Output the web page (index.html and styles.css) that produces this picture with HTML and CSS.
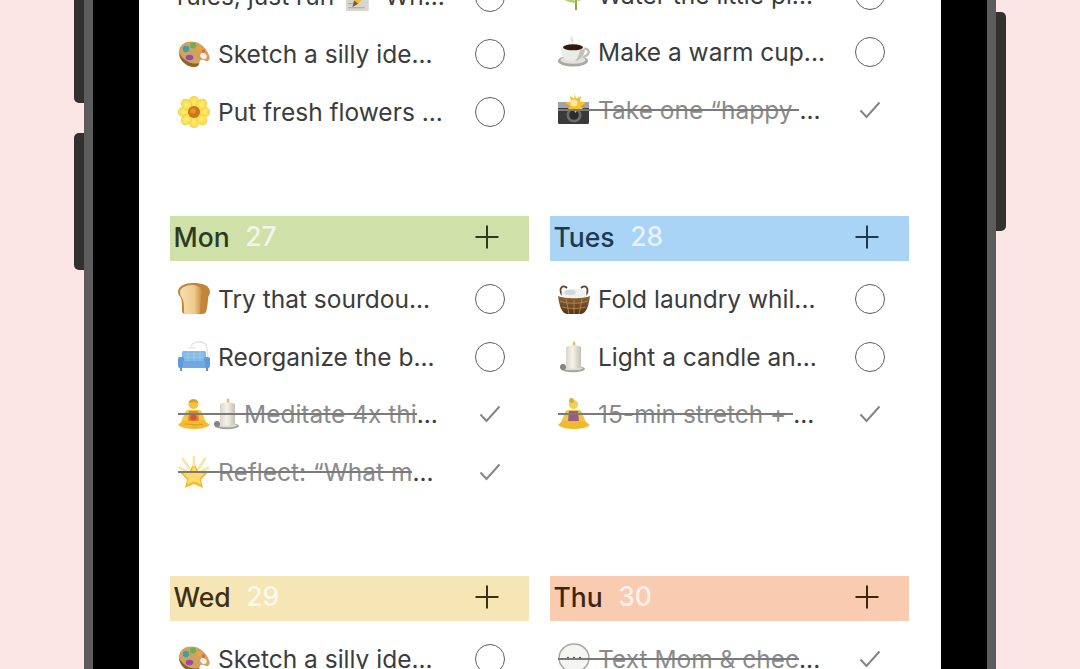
FILE: index.html
```html
<!DOCTYPE html>
<html lang="en">
<head>
<meta charset="utf-8">
<title>Weekly planner</title>
<link rel="stylesheet" href="styles.css">
</head>
<body>
<svg class="sprites" aria-hidden="true">
  <defs>
    <radialGradient id="g-petal"><stop offset="0" stop-color="#fff07a"/><stop offset="1" stop-color="#fad743"/></radialGradient>
    <linearGradient id="g-bread" x1="0" x2="1"><stop offset="0" stop-color="#f6dfae"/><stop offset=".65" stop-color="#eecb8c"/><stop offset="1" stop-color="#c98a3e"/></linearGradient>
    <linearGradient id="g-candle" x1="0" x2="1"><stop offset="0" stop-color="#d9d6cf"/><stop offset=".45" stop-color="#f6f2e8"/><stop offset="1" stop-color="#c4c0b6"/></linearGradient>
    <linearGradient id="g-basket" x1="0" y1="0" x2="0" y2="1"><stop offset="0" stop-color="#8f6435"/><stop offset="1" stop-color="#553417"/></linearGradient>

    <symbol id="e-palette" viewBox="0 0 32 32">
      <path d="M1 13C2 5 10 2 18 4c6 2 12 8 13.500 15 1 4-3 5-6 3-2-1-4 0-4 3 0 4-5 5-10 3C5 25 0 20 1 13z" fill="#cfa264"/>
      <path d="M1 15c1 7 5 11 10 13 5 2 10 1 10-3-5 2-15-1-20-10z" fill="#8f6330"/>
      <ellipse cx="25.500" cy="18" rx="3.400" ry="2.800" fill="#f6efe2" transform="rotate(35 25.500 18)"/>
      <circle cx="8" cy="11" r="3.200" fill="#3f9fa6"/>
      <circle cx="15" cy="7.500" r="3" fill="#6cb04a"/>
      <circle cx="21" cy="10.500" r="2.600" fill="#e8a33a"/>
      <ellipse cx="11.500" cy="19.500" rx="3.800" ry="2.800" fill="#9a4aa0"/>
      <circle cx="25.500" cy="13" r="1.700" fill="#e06a3a"/>
    </symbol>

    <symbol id="e-flower" viewBox="0 0 32 32">
      <circle cx="16" cy="16" r="11" fill="#fad743"/>
      <g fill="url(#g-petal)" stroke="#eec63f" stroke-width=".4">
        <ellipse cx="16" cy="6" rx="5" ry="6"/>
        <ellipse cx="16" cy="26" rx="5" ry="6"/>
        <ellipse cx="6" cy="16" rx="6" ry="5"/>
        <ellipse cx="26" cy="16" rx="6" ry="5"/>
        <ellipse cx="8.500" cy="8.500" rx="5" ry="6" transform="rotate(-45 8.500 8.500)"/>
        <ellipse cx="23.500" cy="8.500" rx="5" ry="6" transform="rotate(45 23.500 8.500)"/>
        <ellipse cx="8.500" cy="23.500" rx="5" ry="6" transform="rotate(45 8.500 23.500)"/>
        <ellipse cx="23.500" cy="23.500" rx="5" ry="6" transform="rotate(-45 23.500 23.500)"/>
      </g>
      <circle cx="16" cy="16" r="6" fill="#c9751a"/>
      <circle cx="15" cy="15" r="2.800" fill="#e2952c"/>
    </symbol>

    <symbol id="e-coffee" viewBox="0 0 32 32">
      <path d="M14 1c-2 2 2 3 0 6" fill="none" stroke="#dedede" stroke-width="2"/>
      <ellipse cx="15" cy="25" rx="15" ry="5.500" fill="#a9a9a2"/>
      <ellipse cx="15" cy="24" rx="12.500" ry="3.800" fill="#e2e2dc"/>
      <path d="M25 13c7-2 8 6 0 8" fill="none" stroke="#bfbfb8" stroke-width="2.400"/>
      <path d="M3 11c0 9 3 14 12 14s12-5 12-14z" fill="#ecece6"/>
      <path d="M17 25c7-1 10-7 10-14h-5c0 6-2 11-5 14z" fill="#c2c2bb"/>
      <ellipse cx="15" cy="11" rx="12" ry="4" fill="#f4f4ef"/>
      <ellipse cx="15" cy="11.300" rx="10" ry="3" fill="#2e1a10"/>
    </symbol>

    <symbol id="e-camera" viewBox="0 0 32 32">
      <rect x="0" y="8" width="31" height="22" rx="1.500" fill="#3a3a3a"/>
      <rect x="0" y="8" width="31" height="6" fill="#a3a3a3"/>
      <circle cx="16" cy="21" r="7.500" fill="#6d6d6d"/>
      <circle cx="16" cy="21" r="4.800" fill="#2c2c2c"/>
      <path d="M16 0l2.500 4.500 4.500-2.500-1 5.500 6 1-5 3.500 3 4.500-6-1.500-2.500 4-2.500-4-6 1.500 3-4.500-5-3.500 6-1-1-5.500 4.500 2.500z" fill="#f6c02f"/>
      <circle cx="16" cy="9" r="3.500" fill="#ffeb9e"/>
    </symbol>

    <symbol id="e-bread" viewBox="0 0 32 32">
      <path d="M0 9C0 3 7 0 15 0c9 0 17 2 17 9 0 3-2 4-2 6 0 5-1 11-2 14-1 2-3 2-6 2H8c-3 0-4-1-4-3 0-5 0-10-1-13-1-2-3-3-3-6z" fill="#c4843a"/>
      <path d="M2 9c0-4 6-7 12-7 6 0 10 3 10 7 0 3-1 4-1 6l-1 14c0 1-1 2-3 2H8c-2 0-2-1-2-2 0-5 0-9-1-12-1-3-3-4-3-8z" fill="url(#g-bread)"/>
    </symbol>

    <symbol id="e-couch" viewBox="0 0 32 32">
      <path d="M13 6C14 0 25-1 28 4c1 2 2 12 2 26" fill="none" stroke="#e3e3df" stroke-width="1.400"/>
      <path d="M9 8c2-4 8-4 9 0z" fill="#f1f1ec"/>
      <rect x="4" y="10" width="24" height="11" rx="1.500" fill="#82b8e8"/>
      <rect x="0" y="16" width="6" height="11" rx="2" fill="#5f9bd6"/>
      <rect x="26" y="16" width="6" height="11" rx="2" fill="#5f9bd6"/>
      <rect x="5" y="20" width="22" height="7" fill="#72aae0"/>
      <path d="M6 13h20M6 16h20M10 10v10M16 10v10M22 10v10" stroke="#a5ccef" stroke-width=".8"/>
      <path d="M3 27v3M29 27v3" stroke="#4a7cae" stroke-width="1.600"/>
    </symbol>

    <symbol id="e-meditate" viewBox="0 0 32 32">
      <circle cx="15.500" cy="6" r="5" fill="#f4c53c"/>
      <path d="M10.500 5c1-5 9-5 10 0-3-1-7-1-10 0z" fill="#dd9f28"/>
      <path d="M10 12h11c2 0 3 2 4 5l3 7H3l3-7c1-3 2-5 4-5z" fill="#f6c83f"/>
      <path d="M11 13h9l1 10H10z" fill="#e58232"/>
      <circle cx="15.500" cy="19.500" r="3" fill="#d9532a"/>
      <path d="M0 27c3-4 7-5 11-4h9c4-1 8 0 12 4-4 3-10 4-16 4S4 30 0 27z" fill="#f3bb30"/>
      <path d="M7 26c5 0 12 2 18 0" fill="none" stroke="#d99a20" stroke-width="1"/>
    </symbol>

    <symbol id="e-meditate2" viewBox="0 0 32 32">
      <circle cx="15.500" cy="6.500" r="4.600" fill="#f0cf5a"/>
      <circle cx="13.500" cy="2.500" r="2.500" fill="#d9ad38"/>
      <path d="M10 12h11c2 0 3 2 4 5l3 7H3l3-7c1-3 2-5 4-5z" fill="#efc64a"/>
      <path d="M11 13h9l1 10H10z" fill="#9b5a86"/>
      <path d="M0 27c3-4 7-5 11-4h9c4-1 8 0 12 4-4 3-10 4-16 4S4 30 0 27z" fill="#f2b92d"/>
    </symbol>

    <symbol id="e-candle" viewBox="0 0 32 32">
      <ellipse cx="15" cy="28" rx="12" ry="3.200" fill="#a3a39d"/>
      <ellipse cx="15" cy="27.300" rx="10" ry="2" fill="#dcdcd6"/>
      <path d="M16 0c-2 2-2 4 0 6 2-2 2-4 0-6z" fill="#dcc26a"/>
      <path d="M8 6c3-2 13-2 15 0v20c-3 2-12 2-15 0z" fill="url(#g-candle)"/>
      <circle cx="5" cy="26" r="3" fill="#85857f"/>
    </symbol>

    <symbol id="e-star" viewBox="0 0 32 32">
      <path d="M16 7l4.500 8 9.500 1.500-7 7 2 8.500-9-4-9 4 2-8.500-7-7 9.500-1.500z" fill="#f7ba2c"/>
      <path d="M16 10l3.500 6.500 7 1-5 5 1.500 6-7-3-7 3 1.500-6-5-5 7-1z" fill="#fbdc6a"/>
      <path d="M16 1v8M5 3l6 9M27 3l-6 9M2 12l6 3M30 12l-6 3" stroke="#f7e6a4" stroke-width="2.800" stroke-linecap="round"/>
    </symbol>

    <symbol id="e-basket" viewBox="0 0 32 32">
      <path d="M4 12C0 5 5 1 9 5M28 12c4-7-1-11-5-7" fill="none" stroke="#5c452e" stroke-width="1.800"/>
      <ellipse cx="16" cy="11" rx="12.500" ry="5.500" fill="#f1f1ef"/>
      <ellipse cx="12" cy="9.500" rx="6" ry="2.800" fill="#d4d9db"/>
      <path d="M0 13c7 3 25 3 32 0-1 9-4 18-9 18H9C4 31 1 22 0 13z" fill="url(#g-basket)"/>
      <path d="M2 18c8 3 20 3 28 0M4 24c7 2 17 2 24 0M8 16l3 15M16 17v14M24 16l-3 15" stroke="#b8905a" stroke-width=".8" fill="none"/>
    </symbol>

    <symbol id="e-bubble" viewBox="0 0 32 32">
      <ellipse cx="16" cy="15" rx="15" ry="14" fill="#f5f5f3" stroke="#a9a9a9" stroke-width="1.500"/>
      <circle cx="10" cy="15" r="1.200" fill="#555"/>
      <circle cx="16" cy="15" r="1.200" fill="#555"/>
      <circle cx="22" cy="15" r="1.200" fill="#555"/>
    </symbol>

    <symbol id="e-plant" viewBox="0 0 32 32">
      <path d="M18 4v27" stroke="#8a9a3a" stroke-width="1.800"/>
      <path d="M18 24C12 24 6 22 2 17c6-2 13 1 16 7zM18 22c2-6 7-8 12-8-1 5-6 8-12 8z" fill="#b3d268"/>
    </symbol>

    <symbol id="e-memo" viewBox="0 0 32 32">
      <rect x="0" y="1" width="28" height="31" fill="#d9d6d0"/>
      <path d="M3 8h22M3 13h22M3 18h16M3 23h10M3 28h20" stroke="#a3a09b" stroke-width="1.200"/>
      <path d="M28 0l4 4-17 19-7 4 2-8z" fill="#f2bb33"/>
      <path d="M10 19l5 4-7 4z" fill="#7a5a3a"/>
    </symbol>

    <symbol id="i-plus" viewBox="0 0 24 24"><path d="M12 0.500v23M0.500 12h23" fill="none" stroke="currentColor" stroke-width="2"/></symbol>
    <symbol id="i-check" viewBox="0 0 22 18"><path d="M1.500 9.500l6 6.500L20.500 1.500" fill="none" stroke="#858585" stroke-width="2"/></symbol>
  </defs>
</svg>

<main class="phone">
  <span class="side-btn side-btn-l1"></span>
  <span class="side-btn side-btn-l2"></span>
  <span class="side-btn side-btn-r"></span>
  <div class="screen">
    <div class="week">

      <section class="day day-clipped">
        <ul class="tasks">
          <li class="row"><span class="label label-plain">rules, just run <svg class="emoji emoji-inline"><use href="#e-memo"/></svg> Wh...</span><span class="mark circle"></span></li>
          <li class="row"><span class="label"><svg class="emoji"><use href="#e-palette"/></svg>Sketch a silly ide...</span><span class="mark circle"></span></li>
          <li class="row"><span class="label"><svg class="emoji"><use href="#e-flower"/></svg>Put fresh flowers ...</span><span class="mark circle"></span></li>
        </ul>
      </section>

      <section class="day day-clipped day-raised">
        <ul class="tasks">
          <li class="row"><span class="label"><svg class="emoji"><use href="#e-plant"/></svg>Water the little pl...</span><span class="mark circle"></span></li>
          <li class="row"><span class="label"><svg class="emoji"><use href="#e-coffee"/></svg>Make a warm cup...</span><span class="mark circle"></span></li>
          <li class="row row-done"><span class="label"><span class="struck"><svg class="emoji"><use href="#e-camera"/></svg>Take one “happy </span><span class="dots">...</span></span><span class="mark"><svg class="check"><use href="#i-check"/></svg></span></li>
        </ul>
      </section>

      <section class="day">
        <header class="day-head head-green">
          <h2 class="day-name">Mon</h2><span class="day-num">27</span>
          <svg class="plus"><use href="#i-plus"/></svg>
        </header>
        <ul class="tasks">
          <li class="row"><span class="label"><svg class="emoji"><use href="#e-bread"/></svg>Try that sourdou...</span><span class="mark circle"></span></li>
          <li class="row"><span class="label"><svg class="emoji"><use href="#e-couch"/></svg>Reorganize the b...</span><span class="mark circle"></span></li>
          <li class="row row-done"><span class="label"><span class="struck"><svg class="emoji emoji-first"><use href="#e-meditate"/></svg><svg class="emoji emoji-second"><use href="#e-candle"/></svg>Meditate 4x thi</span><span class="dots">...</span></span><span class="mark"><svg class="check"><use href="#i-check"/></svg></span></li>
          <li class="row row-done"><span class="label"><span class="struck"><svg class="emoji"><use href="#e-star"/></svg>Reflect: “What m</span><span class="dots">...</span></span><span class="mark"><svg class="check"><use href="#i-check"/></svg></span></li>
        </ul>
      </section>

      <section class="day">
        <header class="day-head head-blue">
          <h2 class="day-name">Tues</h2><span class="day-num">28</span>
          <svg class="plus"><use href="#i-plus"/></svg>
        </header>
        <ul class="tasks">
          <li class="row"><span class="label"><svg class="emoji"><use href="#e-basket"/></svg>Fold laundry whil...</span><span class="mark circle"></span></li>
          <li class="row"><span class="label"><svg class="emoji"><use href="#e-candle"/></svg>Light a candle an...</span><span class="mark circle"></span></li>
          <li class="row row-done"><span class="label"><span class="struck"><svg class="emoji"><use href="#e-meditate2"/></svg>15-min stretch + </span><span class="dots">...</span></span><span class="mark"><svg class="check"><use href="#i-check"/></svg></span></li>
        </ul>
      </section>

      <section class="day">
        <header class="day-head head-yellow">
          <h2 class="day-name">Wed</h2><span class="day-num">29</span>
          <svg class="plus"><use href="#i-plus"/></svg>
        </header>
        <ul class="tasks">
          <li class="row"><span class="label"><svg class="emoji"><use href="#e-palette"/></svg>Sketch a silly ide...</span><span class="mark circle"></span></li>
        </ul>
      </section>

      <section class="day">
        <header class="day-head head-peach">
          <h2 class="day-name">Thu</h2><span class="day-num">30</span>
          <svg class="plus"><use href="#i-plus"/></svg>
        </header>
        <ul class="tasks">
          <li class="row row-done"><span class="label"><span class="struck"><svg class="emoji"><use href="#e-bubble"/></svg>Text Mom &amp; chec</span><span class="dots">...</span></span><span class="mark"><svg class="check"><use href="#i-check"/></svg></span></li>
        </ul>
      </section>

    </div>
  </div>
</main>
</body>
</html>
```
FILE: styles.css
```css
* {
  box-sizing: border-box;
}

html,
body {
  margin: 0;
  height: 669px;
  overflow: hidden;
}

body {
  background: #fbe6e5;
  font-family: Inter, "Liberation Sans", sans-serif;
}

.sprites {
  position: absolute;
  width: 0;
  height: 0;
}

.phone {
  position: relative;
  width: 912px;
  height: 669px;
  margin-left: 84px;
  padding: 0 46px;
  background: #000;
  border-left: 9px solid #5c5c5c;
  border-right: 9px solid #5c5c5c;
}

.side-btn {
  position: absolute;
  width: 10px;
  background: #333130;
}

.side-btn-l1 {
  left: -19px;
  top: -20px;
  height: 123px;
  border-radius: 5px 0 0 5px;
}

.side-btn-l2 {
  left: -19px;
  top: 133px;
  height: 137px;
  border-radius: 5px 0 0 5px;
}

.side-btn-r {
  right: -19px;
  top: 12px;
  height: 219px;
  border-radius: 0 5px 5px 0;
}

.screen {
  height: 669px;
  padding: 0 32px 0 31px;
  background: #fff;
  overflow: hidden;
}

.week {
  display: grid;
  grid-template-columns: 1fr 1fr;
  grid-template-rows: 216px 360px 360px;
  column-gap: 21px;
}

.day {
  min-width: 0;
}

.day-head {
  display: flex;
  align-items: center;
  height: 45px;
  padding-left: 3.5px;
}

.head-green { background: #d0e0a9; color: #2c3a20; }
.head-blue { background: #a9d4f6; color: #1d3a52; }
.head-yellow { background: #f6e6b5; color: #3e3014; }
.head-peach { background: #f9cbb1; color: #3f2410; }

.day-name {
  margin: -3px 0 0;
  font-size: 26.5px;
  font-weight: 550;
  line-height: 45px;
}

.day-num {
  margin-left: 15.500px;
  margin-top: -5px;
  color: #fff;
  opacity: .72;
  font-size: 26.5px;
  font-weight: 550;
  line-height: 40px;
}

.plus {
  width: 24px;
  height: 24px;
  margin-left: auto;
  margin-right: 30px;
  margin-top: -3px;
}

.tasks {
  margin: 9.5px 0 0;
  padding: 0;
  list-style: none;
}

.day-clipped .tasks {
  margin-top: -32px;
}

.day-raised .tasks {
  margin-top: -34px;
}

.row {
  display: flex;
  align-items: center;
  height: 57.5px;
  padding-left: 8px;
}

.label {
  display: flex;
  align-items: center;
  flex: 1;
  min-width: 0;
  color: #3c3c3c;
  font-size: 24.5px;
  white-space: pre;
}

.label-plain {
  display: block;
  margin-left: -1px;
}

.emoji {
  flex: none;
  width: 32px;
  height: 32px;
  margin-right: 8px;
}

.emoji-inline {
  width: 26px;
  height: 30px;
  margin: 0 6px 0 5px;
  vertical-align: -8px;
}

.emoji-first {
  margin-right: 2px;
}

.emoji-second {
  margin-right: 0;
}

.struck {
  position: relative;
  display: flex;
  align-items: center;
  color: #8b8b8b;
}

.struck::after {
  content: "";
  position: absolute;
  left: 0;
  right: 0;
  top: 50%;
  height: 2px;
  margin-top: -1px;
  background: #7a7a7a;
}

.dots {
  color: #3c3c3c;
}

.mark {
  flex: none;
  display: flex;
  align-items: center;
  justify-content: center;
  width: 30px;
  height: 30px;
  margin-right: 24px;
}

.circle {
  border: 1.7px solid #5f5f5f;
  border-radius: 50%;
}

.check {
  width: 22px;
  height: 18px;
}
```
